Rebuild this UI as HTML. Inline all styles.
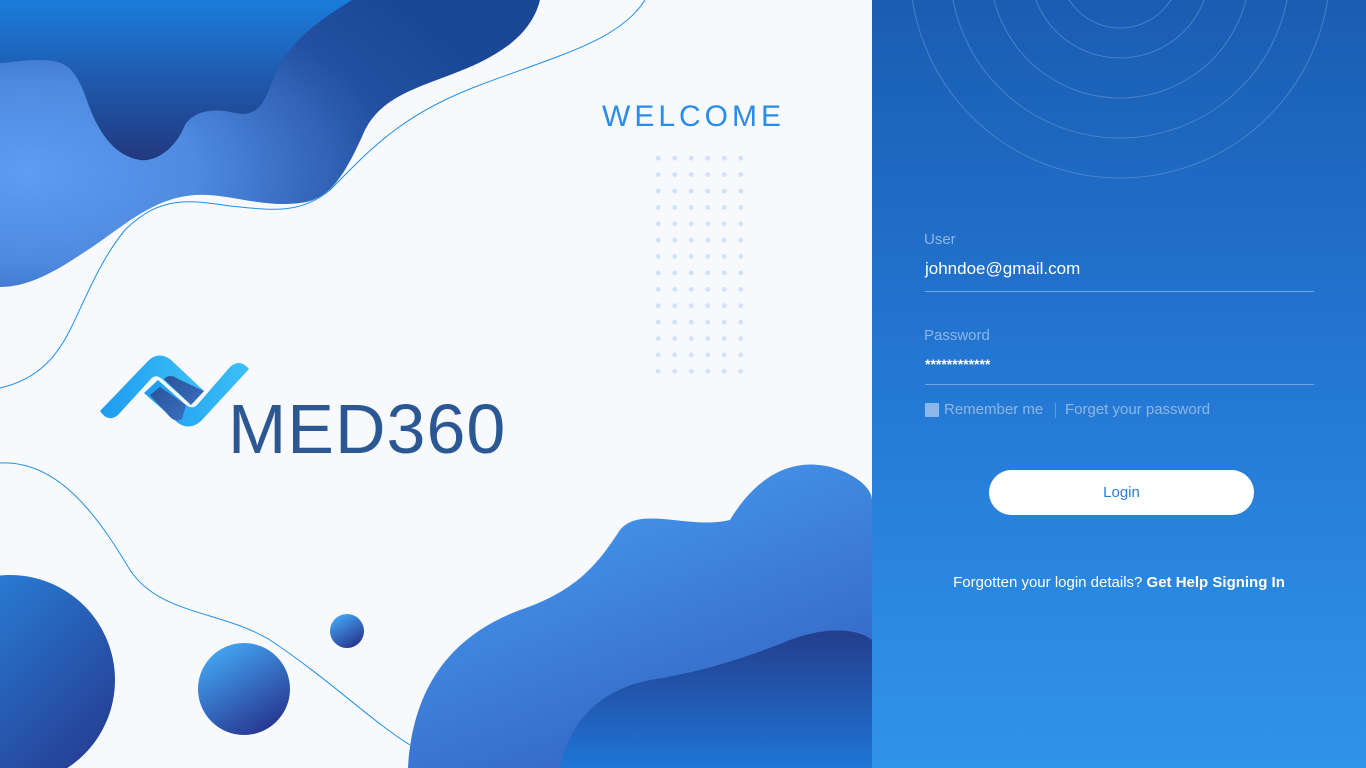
<!DOCTYPE html>
<html><head><style>
body{margin:0;width:1366px;height:768px;overflow:hidden;background:#f7f9fd;font-family:"Liberation Sans",sans-serif;position:relative}
.right{position:absolute;left:872px;top:0;width:494px;height:768px;background:linear-gradient(180deg,#1a5db3 0%,#2478d4 50%,#3094e8 100%);overflow:hidden}
.lbl{position:absolute;left:52px;color:#8db6e6;font-size:15px}
.val{position:absolute;left:53px;color:#fff;font-size:17px}
.line{position:absolute;left:53px;width:389px;height:1px;background:#6ea6e4}
</style></head><body>
<svg width="872" height="768" style="position:absolute;left:0;top:0">
<defs>
<radialGradient id="g1" cx="0.05" cy="0.6" r="0.9"><stop offset="0" stop-color="#5c9cf3"/><stop offset="0.35" stop-color="#4e8ae0"/><stop offset="0.75" stop-color="#2350a2"/><stop offset="1" stop-color="#1a4896"/></radialGradient>
<linearGradient id="g2" x1="0" y1="0" x2="0" y2="1"><stop offset="0" stop-color="#1a7ddb"/><stop offset="0.55" stop-color="#1f56a8"/><stop offset="1" stop-color="#22387f"/></linearGradient>
<linearGradient id="g3" x1="0" y1="0" x2="0.6" y2="1"><stop offset="0" stop-color="#4aa6f6"/><stop offset="1" stop-color="#3463c4"/></linearGradient>
<linearGradient id="g4" x1="0" y1="0" x2="0" y2="1"><stop offset="0" stop-color="#233e8c"/><stop offset="1" stop-color="#1f75d6"/></linearGradient>
<linearGradient id="g5" x1="0" y1="0" x2="1" y2="1"><stop offset="0" stop-color="#2a8fe8"/><stop offset="1" stop-color="#24358a"/></linearGradient>
<linearGradient id="g6" x1="0.2" y1="0" x2="0.8" y2="1"><stop offset="0" stop-color="#45aaf7"/><stop offset="1" stop-color="#25308a"/></linearGradient>
<linearGradient id="lg" x1="0" y1="0" x2="1" y2="0"><stop offset="0" stop-color="#1e9bf0"/><stop offset="1" stop-color="#3cc0f7"/></linearGradient>
<linearGradient id="dk" x1="0" y1="0" x2="1" y2="1"><stop offset="0" stop-color="#2a5296"/><stop offset="1" stop-color="#3b6fc0"/></linearGradient>
</defs>
<path d="M0 0 H540 C530 40 490 60 450 75 C410 90 380 100 365 130 C345 175 330 200 300 203 C260 208 230 193 195 195 C150 198 120 230 80 255 C50 275 25 287 0 287 Z" fill="url(#g1)"/>
<path d="M0 0 H352 C320 20 290 40 275 75 C265 100 260 118 235 113 C215 108 195 110 185 125 C175 150 155 162 140 160 C110 155 95 125 85 95 C75 68 65 60 40 60 C20 60 10 63 0 63 Z" fill="url(#g2)"/>
<path d="M645 0 C620 40 560 55 480 85 C400 115 370 150 330 190 C300 215 270 210 230 206 C190 200 160 195 125 230 C100 260 85 300 70 330 C55 360 35 380 0 388" fill="none" stroke="#2290ea" stroke-width="1"/>
<path d="M0 463 C60 460 100 520 130 570 C160 615 220 610 270 640 C330 680 370 720 410 745" fill="none" stroke="#2290ea" stroke-width="1"/>
<path d="M408 768 C412 700 440 640 520 610 C580 590 600 560 620 530 C640 505 690 530 730 520 C760 470 800 455 840 470 C860 478 872 490 872 500 V768 Z" fill="url(#g3)"/>
<path d="M560 768 C570 720 600 690 650 680 C700 672 740 660 790 640 C830 625 860 630 872 640 V768 Z" fill="url(#g4)"/>
<circle cx="10" cy="680" r="105" fill="url(#g5)"/>
<circle cx="244" cy="689" r="46" fill="url(#g6)"/>
<circle cx="347" cy="631" r="17" fill="url(#g6)"/>
<g transform="translate(98,353)">
<path d="M2 58 L50 8 Q60 -2 72 6 L106 38 L93 52 L64 26 Q57 20 52 27 L20 62 Q10 70 2 58 Z" fill="url(#lg)"/>
<path d="M151 16 L103 68 Q92 78 80 70 L46 40 L60 27 L88 52 Q95 57 100 51 L132 14 Q142 5 151 16 Z" fill="url(#lg)"/>
<path d="M66 26 Q72 20 80 26 L106 38 L93 52 Z" fill="url(#dk)"/>
<path d="M52 42 L62 34 L88 52 L84 66 Q78 70 72 64 Z" fill="url(#dk)"/>
</g>
<text x="228" y="453" font-family="Liberation Sans" font-size="70" letter-spacing="1" fill="#2b5892">MED360</text>
<text x="602" y="126" font-family="Liberation Sans" font-size="30" letter-spacing="4" fill="#2a8ce8">WELCOME</text>
</svg>
<div style="position:absolute;left:650px;top:150px;width:99px;height:232px;background-image:radial-gradient(circle,#d0e3f7 2.2px,transparent 2.6px);background-size:16.5px 16.4px"></div>
<div class="right">
<svg width="494" height="300" style="position:absolute;left:0;top:0" fill="none" stroke="#5b8fd0" stroke-width="1" opacity="0.7">
<circle cx="248" cy="-32" r="60"/><circle cx="248" cy="-32" r="90"/><circle cx="248" cy="-32" r="130"/><circle cx="248" cy="-32" r="170"/><circle cx="248" cy="-32" r="210"/>
</svg>
<div class="lbl" style="top:231px">User</div>
<div class="val" style="top:259px">johndoe@gmail.com</div>
<div class="line" style="top:291px"></div>
<div class="lbl" style="top:327px">Password</div>
<div class="val" style="top:356px;font-size:14px;font-weight:bold">************</div>
<div class="line" style="top:384px"></div>
<div style="position:absolute;left:53px;top:403px;width:14px;height:14px;background:#8ab8ea"></div>
<div class="lbl" style="left:72px;top:401px">Remember me</div>
<div style="position:absolute;left:183px;top:403px;width:1px;height:15px;background:#5f9ae0"></div>
<div class="lbl" style="left:193px;top:401px">Forget your password</div>
<div style="position:absolute;left:117px;top:470px;width:265px;height:45px;border-radius:23px;background:#fff;color:#2a7ed8;font-size:15px;text-align:center;line-height:45px">Login</div>
<div style="position:absolute;left:0;width:494px;top:574px;text-align:center;color:#fff;font-size:15px">Forgotten your login details? <b>Get Help Signing In</b></div>
</div>
</body></html>
